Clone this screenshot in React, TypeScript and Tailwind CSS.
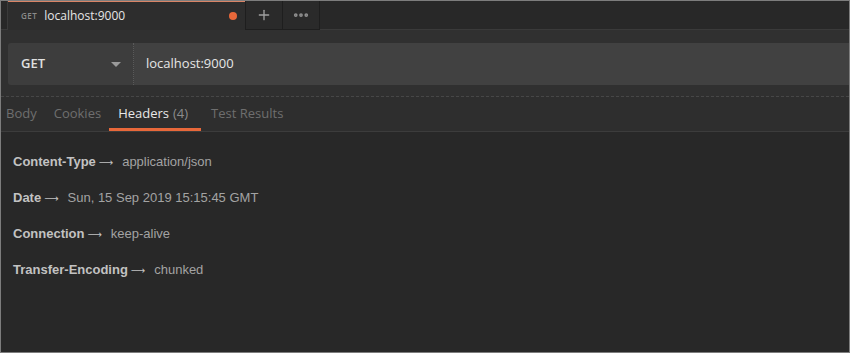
import { Plus, MoreHorizontal } from "lucide-react";

const headers = [
  { key: "Content-Type", value: "application/json" },
  { key: "Date", value: "Sun, 15 Sep 2019 15:15:45 GMT" },
  { key: "Connection", value: "keep-alive" },
  { key: "Transfer-Encoding", value: "chunked" },
];

function App() {
  return (
    <div className="w-[850px] h-[353px] border border-[#7d7d7d] bg-[#282828] flex flex-col overflow-hidden font-['Open_Sans',sans-serif]">
      {/* Tab strip */}
      <div className="h-[29px] flex shrink-0 bg-[#282828]">
        <div className="w-[7px] border-r border-b border-[#3a3a3a]" />
        <div className="w-[237px] flex items-center pl-[13px] pr-[8px] bg-[#2d2d2d] border-t border-[#d98466]">
          <span className="text-[8px] font-semibold text-[#8a8a8a] tracking-[0.5px] mr-[7px]">GET</span>
          <span className="text-[12px] text-[#e6e6e6]">localhost:9000</span>
          <span className="ml-auto w-[8px] h-[8px] rounded-full bg-[#e8683a]" />
        </div>
        <div className="w-[38px] flex items-center justify-center border-l border-r border-b border-[#1e1e1e] bg-[#2a2a2a]">
          <Plus size={16} strokeWidth={2} className="text-[#a0a0a0]" />
        </div>
        <div className="w-[37px] flex items-center justify-center border-r border-b border-[#1e1e1e] bg-[#2a2a2a]">
          <MoreHorizontal size={18} strokeWidth={3} className="text-[#909090]" />
        </div>
        <div className="flex-1 border-b border-[#3a3a3a]" />
      </div>

      {/* Request builder */}
      <div className="bg-[#303030] pt-[13px] pb-[11px] pl-[7px] border-b border-dashed border-[#474747]">
        <div className="flex h-[42px]">
          <div className="w-[126px] flex items-center pl-[13px] pr-[12px] bg-[#3d3d3d] rounded-l-[3px] border-r border-dotted border-[#5a5a5a]">
            <span className="text-[13px] font-semibold text-[#e0e0e0]">GET</span>
            <span className="ml-auto w-0 h-0 border-l-[5px] border-r-[5px] border-t-[5px] border-l-transparent border-r-transparent border-t-[#9a9a9a]" />
          </div>
          <div className="flex-1 flex items-center pl-[12px] bg-[#414141]">
            <span className="text-[13px] text-[#e6e6e6]">localhost:9000</span>
          </div>
        </div>
      </div>

      {/* Response tabs */}
      <div className="h-[35px] flex items-stretch bg-[#2e2e2e] border-b border-[#3c3c3c] text-[13px] shrink-0">
        <div className="flex items-center pl-[5px] pr-[8px] text-[#6e6e6e]">Body</div>
        <div className="flex items-center pl-[9px] pr-[8px] text-[#6e6e6e]">Cookies</div>
        <div className="flex items-center pl-[9px] pr-[13px] border-b-[3px] border-[#e8683a] pt-[3px]">
          <span className="font-medium text-[#e8e8e8]">Headers</span>
          <span className="ml-[4px] text-[#8c8c8c]">(4)</span>
        </div>
        <div className="flex items-center pl-[10px] pr-[9px] text-[#6e6e6e]">Test Results</div>
      </div>

      {/* Headers list */}
      <div className="flex-1 bg-[#282828] pt-[12px] pl-[12px] font-['Liberation_Sans',Arial,sans-serif] text-[13px]">
        {headers.map((h) => (
          <div key={h.key} className="h-[36px] flex items-center">
            <span className="font-bold text-[#c2c2c2]">{h.key}</span>
            <span className="ml-[3px] text-[#c2c2c2] font-['DejaVu_Sans',sans-serif] text-[10px]">⟶</span>
            <span className="ml-[9px] text-[#a3a3a3]">{h.value}</span>
          </div>
        ))}
      </div>
    </div>
  );
}

export default App;
